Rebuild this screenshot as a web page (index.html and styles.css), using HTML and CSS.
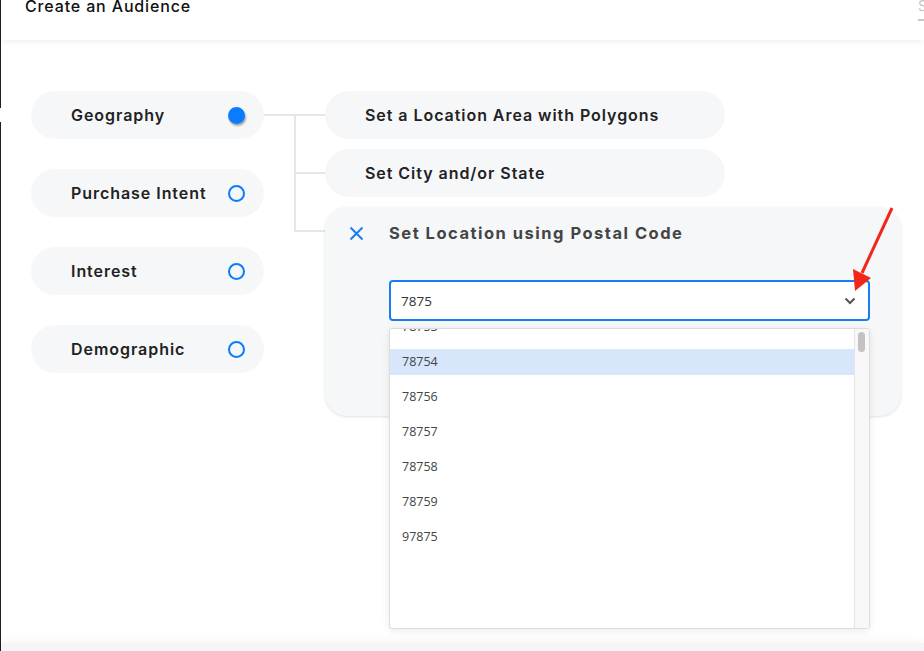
FILE: index.html
```html
<!DOCTYPE html>
<html lang="en">
<head>
<meta charset="utf-8">
<title>Create an Audience</title>
<link rel="stylesheet" href="styles.css">
</head>
<body>
<div class="edge"></div>
<div class="page">
  <header class="topbar">
    <h1 class="title">Create an Audience</h1>
    <span class="save">Save</span>
  </header>
  <main class="content">
    <div class="categories">
      <div class="pill"><span class="pill-label">Geography</span><span class="dot dot-on"></span></div>
      <div class="pill"><span class="pill-label">Purchase Intent</span><span class="dot"></span></div>
      <div class="pill"><span class="pill-label">Interest</span><span class="dot"></span></div>
      <div class="pill"><span class="pill-label">Demographic</span><span class="dot"></span></div>
    </div>
    <svg class="connector" width="61" height="145" viewBox="0 0 61 145">
      <path d="M0 24H61M31 24V141M31 82H61M31 140H61" fill="none" stroke="#e6e6e6" stroke-width="2"/>
    </svg>
    <div class="options">
      <div class="option">Set a Location Area with Polygons</div>
      <div class="option">Set City and/or State</div>
      <div class="card">
        <div class="card-head">
          <svg class="close" width="15" height="15" viewBox="0 0 15 15"><path d="M1.5 1.5L13.5 13.5M13.5 1.5L1.5 13.5" stroke="#1a7cf5" stroke-width="2" fill="none"/></svg>
          <span class="card-title">Set Location using Postal Code</span>
        </div>
        <div class="field">
          <span class="field-value">7875</span>
          <svg class="chev" width="12" height="8" viewBox="0 0 12 8"><path d="M1.5 1.5L6 6L10.5 1.5" stroke="#555" stroke-width="2" fill="none"/></svg>
        </div>
        <div class="menu">
          <ul class="menu-list">
            <li class="menu-item">78753</li>
            <li class="menu-item menu-item-active">78754</li>
            <li class="menu-item">78756</li>
            <li class="menu-item">78757</li>
            <li class="menu-item">78758</li>
            <li class="menu-item">78759</li>
            <li class="menu-item">97875</li>
          </ul>
          <div class="scrollbar"><div class="thumb"></div></div>
        </div>
      </div>
    </div>
  </main>
  <div class="footer"></div>
</div>
<svg class="annot" width="924" height="651" viewBox="0 0 924 651">
  <path d="M892 208L862 273" stroke="#f2261b" stroke-width="3" fill="none"/>
  <path d="M853 269L871 278L855 291Z" fill="#f2261b"/>
</svg>
</body>
</html>
```
FILE: styles.css
```css
* { box-sizing: border-box; }
html, body { margin: 0; padding: 0; }
body {
  width: 924px;
  height: 651px;
  overflow: hidden;
  display: flex;
  background: #fff;
  font-family: Inter, "Noto Sans", sans-serif;
  color: #222;
  position: relative;
}
.edge {
  width: 1px;
  flex: none;
  background: linear-gradient(#1f1f1f 0 108px, #fff 108px 122px, #1f1f1f 122px);
}
.page {
  flex: 1;
  display: flex;
  flex-direction: column;
  min-width: 0;
}
.topbar {
  height: 40px;
  flex: none;
  display: flex;
  justify-content: space-between;
  align-items: flex-start;
  padding-left: 24px;
  background: #fff;
  box-shadow: 0 2px 6px rgba(0,0,0,0.06);
  position: relative;
  z-index: 1;
  overflow: hidden;
}
.title {
  margin: -4px 0 0 0;
  font-size: 16px;
  line-height: 20px;
  font-weight: 500;
  color: #111;
  letter-spacing: 0.85px;
}
.save {
  margin: -4px -34px 0 0;
  width: 40px;
  font-size: 14px;
  line-height: 20px;
  height: 25px;
  color: #c4c4c4;
  border-bottom: 2px solid #c8c8c8;
}
.content {
  flex: 1;
  display: flex;
  align-items: flex-start;
  padding: 51px 0 0 30px;
  min-height: 0;
}
.categories {
  width: 233px;
  flex: none;
  display: flex;
  flex-direction: column;
  gap: 30px;
}
.pill {
  height: 48px;
  border-radius: 24px;
  background: #f6f7f9;
  display: flex;
  align-items: center;
  justify-content: space-between;
  padding: 0 19px 0 40px;
}
.pill-label, .option {
  font-size: 16px;
  font-weight: 600;
  color: #222;
  letter-spacing: 0.95px;
}
.dot {
  width: 17px;
  height: 17px;
  border-radius: 50%;
  border: 2px solid #0a7cff;
}
.dot-on {
  background: #0a7cff;
  box-shadow: 1px 2px 2px rgba(0,0,0,0.35);
}
.connector { flex: none; display: block; }
.options {
  width: 576px;
  flex: none;
  display: flex;
  flex-direction: column;
  align-items: flex-start;
  gap: 10px;
}
.option {
  width: 400px;
  height: 48px;
  border-radius: 24px;
  background: #f6f7f9;
  display: flex;
  align-items: center;
  padding-left: 40px;
}
.card {
  width: 576px;
  height: 209px;
  border-radius: 22px;
  background: #f6f7f9;
  box-shadow: 0 1px 3px rgba(0,0,0,0.12);
  position: relative;
  padding: 18px 31px 0 24px;
}
.card-head {
  display: flex;
  align-items: center;
  gap: 25px;
  height: 16px;
}
.close { display: block; flex: none; }
.card-title {
  font-size: 16.5px;
  font-weight: 700;
  color: #444;
  letter-spacing: 1.5px;
}
.field {
  margin: 39px 0 0 40px;
  height: 41px;
  background: #fff;
  border: 2px solid #1a7cf5;
  border-radius: 4px;
  display: flex;
  align-items: center;
  justify-content: space-between;
  padding: 0 12px 0 10px;
  font-family: "Open Sans", "Noto Sans", sans-serif;
  font-size: 13.5px;
  color: #333;
}
.chev { display: block; }
.menu {
  position: absolute;
  left: 64px;
  top: 121px;
  width: 481px;
  height: 301px;
  background: #fff;
  border: 1px solid #dcdcdc;
  border-radius: 3px;
  box-shadow: 0 2px 8px rgba(0,0,0,0.08);
  overflow: hidden;
  display: flex;
  z-index: 2;
}
.menu-list {
  list-style: none;
  margin: -15px 0 0 0;
  padding: 0;
  flex: 1;
  display: flex;
  flex-direction: column;
  gap: 9px;
}
.menu-item {
  height: 26px;
  line-height: 26px;
  padding-left: 12px;
  font-family: "Open Sans", "Noto Sans", sans-serif;
  font-size: 12.5px;
  color: #444;
}
.menu-item-active { background: #d7e6fb; }
.scrollbar {
  width: 15px;
  flex: none;
  background: #f8f8f8;
  border-left: 1px solid #e6e6e6;
  padding: 3px 3px 0 3px;
}
.thumb {
  width: 7px;
  height: 20px;
  border-radius: 4px;
  background: #c2c2c2;
}
.footer {
  height: 8px;
  flex: none;
  background: #f5f5f5;
  box-shadow: 0 -3px 8px rgba(0,0,0,0.04);
}
.annot {
  position: absolute;
  left: 0;
  top: 0;
  pointer-events: none;
  z-index: 5;
}
```
